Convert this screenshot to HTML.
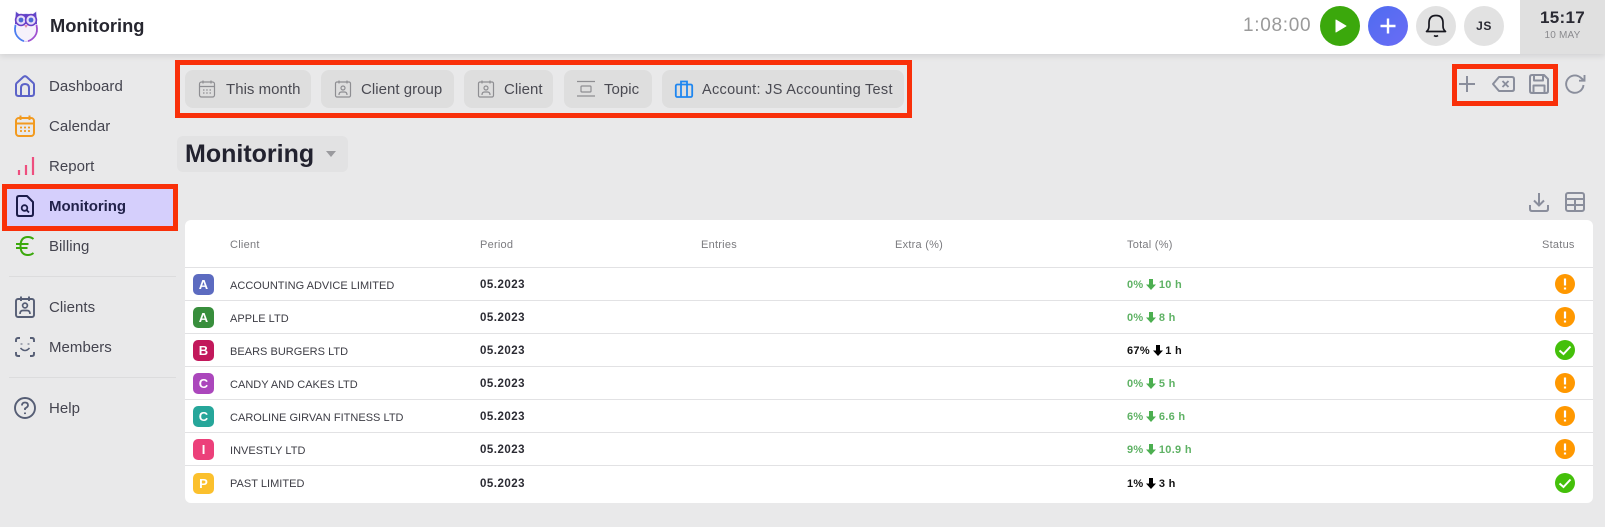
<!DOCTYPE html>
<html><head><meta charset="utf-8">
<style>
*{box-sizing:border-box}
html,body{margin:0;padding:0}
body{width:1605px;height:527px;position:relative;overflow:hidden;background:#e9e9ea;font-family:"Liberation Sans",sans-serif;color:#2a2a3a}
.a{position:absolute;white-space:nowrap}
svg{position:absolute;fill:none;overflow:visible}
.nav{position:absolute;left:49px;font-size:15px;line-height:20px;letter-spacing:.05px;color:#44444f}
.chip{position:absolute;top:70px;height:38px;background:#dedede;border-radius:8px}
.chip span{position:absolute;top:11px;font-size:15px;line-height:18px;letter-spacing:.03px;color:#4a4a52;white-space:nowrap}
.th{position:absolute;top:239px;font-size:11px;line-height:12px;letter-spacing:.25px;color:#7b7b7f;font-weight:400;white-space:nowrap}
.line{position:absolute;left:185px;width:1408px;height:1px;background:#e2e2e4}
.av{position:absolute;left:193px;width:21px;height:21px;border-radius:5px;color:#fff;font-weight:700;font-size:13px;line-height:21px;text-align:center}
.nm{position:absolute;left:230px;font-size:11px;line-height:12px;letter-spacing:.02px;color:#3c3c44;white-space:nowrap}
.pd{position:absolute;left:480px;font-size:11.5px;line-height:12px;letter-spacing:.5px;font-weight:700;color:#2b2b33;white-space:nowrap}
.tt{position:absolute;left:1127px;font-size:11px;line-height:12px;letter-spacing:.3px;font-weight:700;color:#5fb265;white-space:nowrap}
.tt.k{color:#111}
</style></head><body>

<!-- top bar -->
<div class="a" style="left:0;top:0;width:1605px;height:54px;background:#fff;box-shadow:0 2px 6px rgba(0,0,0,.1)"></div>
<svg style="left:13px;top:11px" width="26" height="31" viewBox="0 0 26 31">
<path d="M3 1 L7 4 Q13 2 19 4 L23 1 L23.5 12 Q25 20 22 25 Q18 30.5 13 30.5 Q8 30.5 4 25 Q1 20 2.5 12 Z" fill="#f6f1fb" stroke="#c8b4ee" stroke-width=".8"/>
<path d="M3 1 L7 4 Q13 2 19 4 L23 1 L24 13 L2 13Z" fill="#5a49c8"/>
<circle cx="8" cy="9" r="5.4" fill="#e6dcf8" stroke="#6a3fc8" stroke-width="1.6"/>
<circle cx="18" cy="9" r="5.4" fill="#e6dcf8" stroke="#6a3fc8" stroke-width="1.6"/>
<circle cx="8" cy="9" r="2.4" fill="#4a6ad5"/><circle cx="18" cy="9" r="2.4" fill="#4a6ad5"/>
<path d="M2.5 14 Q1 21 4 25 Q7 29 11 30.2" stroke="#4b7df0" stroke-width="1.8"/>
<path d="M23.5 14 Q25 21 22 25 Q19 29 15 30.2" stroke="#a050d0" stroke-width="1.8"/>
<path d="M11 14 L13 17 L15 14Z" fill="#e08ab0"/>
</svg>
<div class="a" style="left:50px;top:14px;font-size:18.3px;line-height:24px;font-weight:700;color:#26262f">Monitoring</div>

<div class="a" style="left:1243px;top:14px;font-size:19px;line-height:24px;letter-spacing:.7px;color:#9a9a9a">1:08:00</div>
<div class="a" style="left:1320px;top:6px;width:40px;height:40px;border-radius:50%;background:#3ba80c"></div>
<svg style="left:1320px;top:6px" width="40" height="40"><path d="M16 14 L26 20 L16 26Z" fill="#fff" stroke="#fff" stroke-width="1" stroke-linejoin="round"/></svg>
<div class="a" style="left:1368px;top:6px;width:40px;height:40px;border-radius:50%;background:linear-gradient(135deg,#4f6cf0,#6a6cf5)"></div>
<svg style="left:1368px;top:6px" width="40" height="40"><path d="M20 12.5V27.5M12.5 20H27.5" stroke="#fff" stroke-width="2.4"/></svg>
<div class="a" style="left:1416px;top:6px;width:40px;height:40px;border-radius:50%;background:#e2e2e2"></div>
<svg style="left:1416px;top:6px" width="40" height="40" viewBox="0 0 40 40"><path d="M10.5 25.5 H29.5 Q27 23.5 27 20 V17 Q27 9.5 20 9.5 Q13 9.5 13 17 V20 Q13 23.5 10.5 25.5Z" stroke="#17171f" stroke-width="1.7" stroke-linejoin="round"/><path d="M18 29.5 Q20 31 22 29.5" stroke="#17171f" stroke-width="1.7"/></svg>
<div class="a" style="left:1464px;top:6px;width:40px;height:40px;border-radius:50%;background:#e2e2e2;text-align:center;font-size:12px;line-height:40px;font-weight:700;color:#2a2a33;letter-spacing:.5px">JS</div>
<div class="a" style="left:1520px;top:0;width:85px;height:54px;background:#e0e0e0"></div>
<div class="a" style="left:1520px;top:7px;width:85px;text-align:center;font-size:17px;line-height:21px;font-weight:700;color:#2a2a33;letter-spacing:.3px">15:17</div>
<div class="a" style="left:1520px;top:30px;width:85px;text-align:center;font-size:10px;line-height:12px;color:#8a8a8e;letter-spacing:.2px">10 MAY</div>

<!-- sidebar -->
<svg style="left:15px;top:75px" width="20" height="22" viewBox="0 0 20 22"><path d="M1 9.5 Q1 8.5 2 7.7 L8.5 1.8 Q10 .6 11.5 1.8 L18 7.7 Q19 8.5 19 9.5 V18.5 Q19 21 16.5 21 H3.5 Q1 21 1 18.5Z M6 21 V13 Q6 9 10 9 Q14 9 14 13 V21" stroke="#5c63c8" stroke-width="2" stroke-linejoin="round"/></svg>
<div class="nav" style="top:77px">Dashboard</div>
<svg style="left:15px;top:115px" width="20" height="22" viewBox="0 0 20 22"><rect x="1" y="3" width="18" height="18" rx="3" stroke="#f29a1f" stroke-width="2"/><path d="M1 8.5H19M5.5 .5V5M14.5 .5V5" stroke="#f29a1f" stroke-width="2"/><path d="M5 12.5h2M9 12.5h2M13 12.5h2M5 16h2M9 16h2M13 16h2" stroke="#f29a1f" stroke-width="1.8"/></svg>
<div class="nav" style="top:117px">Calendar</div>
<svg style="left:15px;top:156px" width="20" height="20"><path d="M4 19V14M11 19V9M18 19V1" stroke="#ee4f7f" stroke-width="2.2"/></svg>
<div class="nav" style="top:157px">Report</div>

<div class="a" style="left:2px;top:184px;width:176px;height:47px;background:#d5cffc;border:5px solid #f9300a"></div>
<svg style="left:16px;top:195px" width="18" height="22" viewBox="0 0 18 22"><path d="M11 1 H3 Q1 1 1 3 V19 Q1 21 3 21 H15 Q17 21 17 19 V7Z" stroke="#1c1c4a" stroke-width="2" stroke-linejoin="round"/><circle cx="8.5" cy="13" r="2.8" stroke="#1c1c4a" stroke-width="1.8"/><path d="M10.5 15 L13 17.5" stroke="#1c1c4a" stroke-width="1.8"/></svg>
<div class="nav" style="top:197px;font-weight:700;color:#22224a;letter-spacing:-.05px">Monitoring</div>

<svg style="left:16px;top:236px" width="18" height="20" viewBox="0 0 18 20"><path d="M17.5 3 Q15 1 12 1 Q4.5 1 4.5 10 Q4.5 19 12 19 Q15 19 17.5 17 M0 8 H12.5 M0 12 H11.5" stroke="#3ba80c" stroke-width="2"/></svg>
<div class="nav" style="top:237px">Billing</div>
<div class="a" style="left:9px;top:276px;width:167px;height:1px;background:#dcdcdd"></div>
<svg style="left:15px;top:296px" width="20" height="22" viewBox="0 0 20 22"><rect x="1" y="3" width="18" height="18" rx="2" stroke="#565e75" stroke-width="1.9"/><path d="M6 .5V5M14 .5V5" stroke="#565e75" stroke-width="1.9"/><circle cx="10" cy="9.5" r="2.4" stroke="#565e75" stroke-width="1.7"/><path d="M5 18 Q5 14.5 8 14.5 H12 Q15 14.5 15 18" stroke="#565e75" stroke-width="1.7"/></svg>
<div class="nav" style="top:298px">Clients</div>
<svg style="left:15px;top:337px" width="20" height="20" viewBox="0 0 20 20"><path d="M1 5V3Q1 1 3 1H5M15 1H17Q19 1 19 3V5M1 15V17Q1 19 3 19H5M15 19H17Q19 19 19 17V15" stroke="#565e75" stroke-width="1.9"/><path d="M5.5 11 Q10 16 14.5 11" stroke="#565e75" stroke-width="1.6"/><path d="M6.5 6.5v1M13.5 6.5v1" stroke="#565e75" stroke-width="1.9"/></svg>
<div class="nav" style="top:338px">Members</div>
<div class="a" style="left:9px;top:377px;width:167px;height:1px;background:#dcdcdd"></div>
<svg style="left:14px;top:397px" width="22" height="22" viewBox="0 0 22 22"><circle cx="11" cy="11" r="10" stroke="#565e75" stroke-width="1.9"/><path d="M8 8.5 Q8 5.5 11 5.5 Q14 5.5 14 8.3 Q14 10 11 11.5 V13" stroke="#565e75" stroke-width="1.8"/><path d="M11 15.5v1.6" stroke="#565e75" stroke-width="1.9"/></svg>
<div class="nav" style="top:399px">Help</div>

<!-- filter bar -->
<div class="a" style="left:175px;top:60px;width:737px;height:58px;border:5px solid #f9300a"></div>
<div class="chip" style="left:185px;width:126px"><span style="left:41px">This month</span></div>
<svg style="left:199px;top:80px" width="16" height="18" viewBox="0 0 16 18"><rect x=".5" y="2" width="15" height="15" rx="2" stroke="#8e8e92" stroke-width="1.2"/><path d="M.5 6.5H15.5M4 .5V3.5M12 .5V3.5" stroke="#8e8e92" stroke-width="1.2"/><path d="M4 10h1.5M7.2 10h1.5M10.5 10h1.5M4 13h1.5M7.2 13h1.5M10.5 13h1.5" stroke="#8e8e92" stroke-width="1.2"/></svg>
<div class="chip" style="left:321px;width:133px"><span style="left:40px">Client group</span></div>
<svg style="left:335px;top:80px" width="16" height="18" viewBox="0 0 16 18"><rect x=".5" y="2" width="15" height="15" rx="1.5" stroke="#8e8e92" stroke-width="1.2"/><path d="M4 .5V3.5M12 .5V3.5" stroke="#8e8e92" stroke-width="1.2"/><circle cx="8" cy="8" r="2" stroke="#8e8e92" stroke-width="1.2"/><path d="M4 15 Q4 12 6.5 12 H9.5 Q12 12 12 15" stroke="#8e8e92" stroke-width="1.2"/></svg>
<div class="chip" style="left:464px;width:89px"><span style="left:40px">Client</span></div>
<svg style="left:478px;top:80px" width="16" height="18" viewBox="0 0 16 18"><rect x=".5" y="2" width="15" height="15" rx="1.5" stroke="#8e8e92" stroke-width="1.2"/><path d="M4 .5V3.5M12 .5V3.5" stroke="#8e8e92" stroke-width="1.2"/><circle cx="8" cy="8" r="2" stroke="#8e8e92" stroke-width="1.2"/><path d="M4 15 Q4 12 6.5 12 H9.5 Q12 12 12 15" stroke="#8e8e92" stroke-width="1.2"/></svg>
<div class="chip" style="left:564px;width:88px"><span style="left:40px">Topic</span></div>
<svg style="left:577px;top:81px" width="18" height="16" viewBox="0 0 18 16"><path d="M0 .5H18M0 15H18" stroke="#8e8e92" stroke-width="1.2"/><rect x="4" y="5" width="10" height="6" rx="1" stroke="#8e8e92" stroke-width="1.2"/></svg>
<div class="chip" style="left:662px;width:242px"><span style="left:40px;font-size:14.5px;letter-spacing:.3px">Account: JS Accounting Test</span></div>
<svg style="left:675px;top:80px" width="18" height="18" viewBox="0 0 18 18"><rect x=".8" y="4.5" width="16.4" height="12.5" rx="1.5" stroke="#1e86f0" stroke-width="1.8"/><path d="M6 17V4.5M12 17V4.5M6 4.5V1.5H12V4.5" stroke="#1e86f0" stroke-width="1.8"/></svg>

<!-- right tool icons -->
<div class="a" style="left:1452px;top:64px;width:106px;height:42px;border:5px solid #f9300a"></div>
<svg style="left:1458px;top:75px" width="18" height="18"><path d="M9 1V17M1 9H17" stroke="#8a8e9c" stroke-width="2"/></svg>
<svg style="left:1492px;top:75px" width="23" height="18" viewBox="0 0 23 18"><path d="M7 2 H20 Q22 2 22 4 V14 Q22 16 20 16 H7 L1 9Z" stroke="#8a8e9c" stroke-width="2" stroke-linejoin="round"/><path d="M10.5 6 L16.5 12M16.5 6 L10.5 12" stroke="#8a8e9c" stroke-width="1.9"/></svg>
<svg style="left:1529px;top:74px" width="20" height="20" viewBox="0 0 20 20"><path d="M1 3 Q1 1 3 1 H15 L19 5 V17 Q19 19 17 19 H3 Q1 19 1 17Z M5 1 V6.5 H14 V1 M4.5 19 V11.5 H15.5 V19" stroke="#8a8e9c" stroke-width="2" stroke-linejoin="round"/></svg>
<svg style="left:1565px;top:74px" width="21" height="20" viewBox="0 0 21 20"><path d="M18.5 11 A8.7 8.7 0 1 1 15.5 3.5 L19 6.5 M19.5 1 V6.7 H14" stroke="#8a8e9c" stroke-width="1.9"/></svg>

<!-- page title -->
<div class="a" style="left:177px;top:136px;width:171px;height:36px;background:#e2e2e3;border-radius:6px"></div>
<div class="a" style="left:185px;top:139px;font-size:25px;line-height:31px;font-weight:700;color:#22222f">Monitoring</div>
<svg style="left:326px;top:151px" width="10" height="6"><path d="M0 0H10L5 6Z" fill="#9a9a9e"/></svg>

<svg style="left:1529px;top:192px" width="20" height="20" viewBox="0 0 20 20"><path d="M10 1V13M5 8.5 L10 13.5 L15 8.5M1 13V17Q1 19 3 19H17Q19 19 19 17V13" stroke="#8a8e9c" stroke-width="2"/></svg>
<svg style="left:1565px;top:192px" width="20" height="20" viewBox="0 0 20 20"><rect x="1" y="1" width="18" height="18" rx="2" stroke="#8a8e9c" stroke-width="2"/><path d="M1 7H19M1 13H19M10 7V19" stroke="#8a8e9c" stroke-width="2"/></svg>

<!-- table -->
<div class="a" style="left:185px;top:220px;width:1408px;height:283px;background:#fff;border-radius:6px"></div>
<div class="th" style="left:230px">Client</div>
<div class="th" style="left:480px">Period</div>
<div class="th" style="left:701px">Entries</div>
<div class="th" style="left:895px">Extra (%)</div>
<div class="th" style="left:1127px">Total (%)</div>
<div class="th" style="left:1542px">Status</div>
<div class="line" style="top:267px"></div>
<div class="line" style="top:300px"></div>
<div class="line" style="top:333px"></div>
<div class="line" style="top:366px"></div>
<div class="line" style="top:399px"></div>
<div class="line" style="top:432px"></div>
<div class="line" style="top:465px"></div>

<div class="av" style="top:274px;background:#5c6bc0">A</div><div class="nm" style="top:280px">ACCOUNTING ADVICE LIMITED</div><div class="pd" style="top:279px">05.2023</div>
<div class="av" style="top:307px;background:#388e3c">A</div><div class="nm" style="top:313px">APPLE LTD</div><div class="pd" style="top:312px">05.2023</div>
<div class="av" style="top:340px;background:#c2185b">B</div><div class="nm" style="top:346px">BEARS BURGERS LTD</div><div class="pd" style="top:345px">05.2023</div>
<div class="av" style="top:373px;background:#ab47bc">C</div><div class="nm" style="top:379px">CANDY AND CAKES LTD</div><div class="pd" style="top:378px">05.2023</div>
<div class="av" style="top:406px;background:#26a69a">C</div><div class="nm" style="top:412px">CAROLINE GIRVAN FITNESS LTD</div><div class="pd" style="top:411px">05.2023</div>
<div class="av" style="top:439px;background:#ec407a">I</div><div class="nm" style="top:445px">INVESTLY LTD</div><div class="pd" style="top:444px">05.2023</div>
<div class="av" style="top:473px;background:#fbc02d">P</div><div class="nm" style="top:478px">PAST LIMITED</div><div class="pd" style="top:478px">05.2023</div>

<div class="tt" style="top:279px">0% <span style="margin-left:12px">10 h</span></div>
<div class="tt" style="top:312px">0% <span style="margin-left:12px">8 h</span></div>
<div class="tt k" style="top:345px">67% <span style="margin-left:12px">1 h</span></div>
<div class="tt" style="top:378px">0% <span style="margin-left:12px">5 h</span></div>
<div class="tt" style="top:411px">6% <span style="margin-left:12px">6.6 h</span></div>
<div class="tt" style="top:444px">9% <span style="margin-left:12px">10.9 h</span></div>
<div class="tt k" style="top:478px">1% <span style="margin-left:12px">3 h</span></div>

<svg style="left:1146px;top:279px" width="10" height="11"><path d="M3 0H7V5.5H10L5 11L0 5.5H3Z" fill="#4caf50"/></svg>
<svg style="left:1146px;top:312px" width="10" height="11"><path d="M3 0H7V5.5H10L5 11L0 5.5H3Z" fill="#4caf50"/></svg>
<svg style="left:1153px;top:345px" width="10" height="11"><path d="M3 0H7V5.5H10L5 11L0 5.5H3Z" fill="#000"/></svg>
<svg style="left:1146px;top:378px" width="10" height="11"><path d="M3 0H7V5.5H10L5 11L0 5.5H3Z" fill="#4caf50"/></svg>
<svg style="left:1146px;top:411px" width="10" height="11"><path d="M3 0H7V5.5H10L5 11L0 5.5H3Z" fill="#4caf50"/></svg>
<svg style="left:1146px;top:444px" width="10" height="11"><path d="M3 0H7V5.5H10L5 11L0 5.5H3Z" fill="#4caf50"/></svg>
<svg style="left:1146px;top:478px" width="10" height="11"><path d="M3 0H7V5.5H10L5 11L0 5.5H3Z" fill="#000"/></svg>

<svg style="left:1555px;top:274px" width="20" height="20"><circle cx="10" cy="10" r="10" fill="#ff9800"/><path d="M10 4.5V11.5M10 13.5V15.5" stroke="#fff" stroke-width="2.2"/></svg>
<svg style="left:1555px;top:307px" width="20" height="20"><circle cx="10" cy="10" r="10" fill="#ff9800"/><path d="M10 4.5V11.5M10 13.5V15.5" stroke="#fff" stroke-width="2.2"/></svg>
<svg style="left:1555px;top:340px" width="20" height="20"><circle cx="10" cy="10" r="10" fill="#44c00a"/><path d="M4.5 10.5 L8.5 14 L15.5 6.5" stroke="#fff" stroke-width="2"/></svg>
<svg style="left:1555px;top:373px" width="20" height="20"><circle cx="10" cy="10" r="10" fill="#ff9800"/><path d="M10 4.5V11.5M10 13.5V15.5" stroke="#fff" stroke-width="2.2"/></svg>
<svg style="left:1555px;top:406px" width="20" height="20"><circle cx="10" cy="10" r="10" fill="#ff9800"/><path d="M10 4.5V11.5M10 13.5V15.5" stroke="#fff" stroke-width="2.2"/></svg>
<svg style="left:1555px;top:439px" width="20" height="20"><circle cx="10" cy="10" r="10" fill="#ff9800"/><path d="M10 4.5V11.5M10 13.5V15.5" stroke="#fff" stroke-width="2.2"/></svg>
<svg style="left:1555px;top:473px" width="20" height="20"><circle cx="10" cy="10" r="10" fill="#44c00a"/><path d="M4.5 10.5 L8.5 14 L15.5 6.5" stroke="#fff" stroke-width="2"/></svg>

</body></html>
